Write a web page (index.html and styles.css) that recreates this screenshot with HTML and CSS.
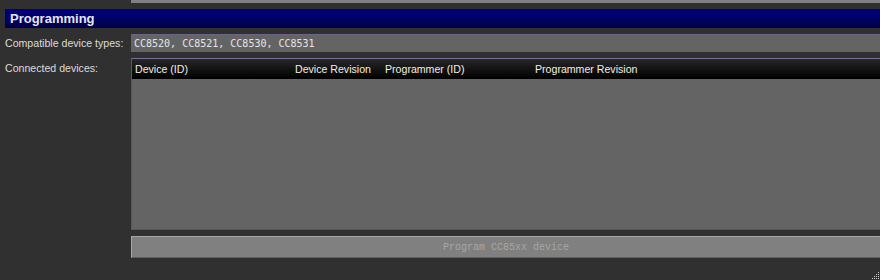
FILE: index.html
```html
<!DOCTYPE html>
<html lang="en">
<head>
  <meta charset="UTF-8">
  <title>Programming</title>
  <link rel="stylesheet" href="styles.css">
</head>
<body>
  <div class="topbar"></div>
  <div class="section-title">Programming</div>

  <div class="row">
    <div class="label">Compatible device types:</div>
    <div class="field">CC8520, CC8521, CC8530, CC8531</div>
  </div>

  <div class="row">
    <div class="label label-top">Connected devices:</div>
    <div class="list">
      <div class="list-header">
        <span>Device (ID)</span>
        <span>Device Revision</span>
        <span>Programmer (ID)</span>
        <span>Programmer Revision</span>
      </div>
      <div class="list-body"></div>
    </div>
  </div>

  <div class="row">
    <div class="label"></div>
    <button class="program" disabled>Program CC85xx device</button>
  </div>

  <div class="grip">
    <svg width="10" height="10" viewBox="0 0 10 10">
      <rect x="8" y="2" width="1" height="1" fill="#d0d0d0"/>
      <rect x="6" y="4" width="1" height="1" fill="#d0d0d0"/>
      <rect x="8" y="4" width="1" height="1" fill="#d0d0d0"/>
      <rect x="4" y="6" width="1" height="1" fill="#d0d0d0"/>
      <rect x="6" y="6" width="1" height="1" fill="#d0d0d0"/>
      <rect x="8" y="6" width="1" height="1" fill="#d0d0d0"/>
      <rect x="2" y="8" width="1" height="1" fill="#d0d0d0"/>
      <rect x="4" y="8" width="1" height="1" fill="#d0d0d0"/>
      <rect x="6" y="8" width="1" height="1" fill="#d0d0d0"/>
      <rect x="8" y="8" width="1" height="1" fill="#d0d0d0"/>
    </svg>
  </div>
</body>
</html>
```

FILE: styles.css
```css
body {
  margin: 0;
  background: #303030;
  font-family: "Liberation Sans", Arial, sans-serif;
  font-size: 10.6px;
  color: #dcdcdc;
  height: 280px;
  overflow: hidden;
  position: relative;
}

.topbar {
  margin-left: 131px;
  height: 3px;
  background: #808080;
}

.section-title {
  margin: 6px 0 0 5px;
  height: 19px;
  line-height: 19px;
  padding-left: 5px;
  background: linear-gradient(#000082, #000046);
  color: #e6e6f6;
  font-size: 13px;
  font-weight: bold;
}

.row {
  display: flex;
  margin-top: 6px;
}

.label {
  width: 126px;
  padding-left: 5px;
  display: flex;
  align-items: center;
  flex-shrink: 0;
}

.label-top {
  align-items: flex-start;
  padding-top: 4px;
}

.field {
  flex: 1;
  height: 17px;
  line-height: 17px;
  border-top: 1px solid #6c6488;
  background: #646464;
  padding-left: 3px;
  font-family: "DejaVu Sans Mono", "Liberation Mono", monospace;
  font-size: 10px;
  color: #e4e4e4;
  white-space: pre;
}

.list {
  flex: 1;
  height: 170px;
  border-top: 1px solid #76709a;
  border-left: 1px solid #58527a;
  border-bottom: 1px solid #58527a;
  display: flex;
  flex-direction: column;
}

.list-header {
  display: grid;
  grid-template-columns: 160px 90px 150px 1fr;
  padding-left: 3px;
  height: 20px;
  line-height: 20px;
  background: linear-gradient(#272727, #000000);
  color: #f2eee0;
}

.list-body {
  flex: 1;
  background: #646464;
}

.program {
  flex: 1;
  height: 22px;
  margin: 0;
  padding: 0;
  background: #808080;
  border: none;
  border-top: 1px solid #a8a8a8;
  border-left: 1px solid #a8a8a8;
  border-bottom: 1px solid #606060;
  font-family: "Liberation Mono", "Courier New", monospace;
  font-size: 10px;
  color: #a6a6a6;
}

.grip {
  position: absolute;
  right: 0;
  bottom: 0;
  width: 10px;
  height: 10px;
}

.grip svg {
  display: block;
}
```
